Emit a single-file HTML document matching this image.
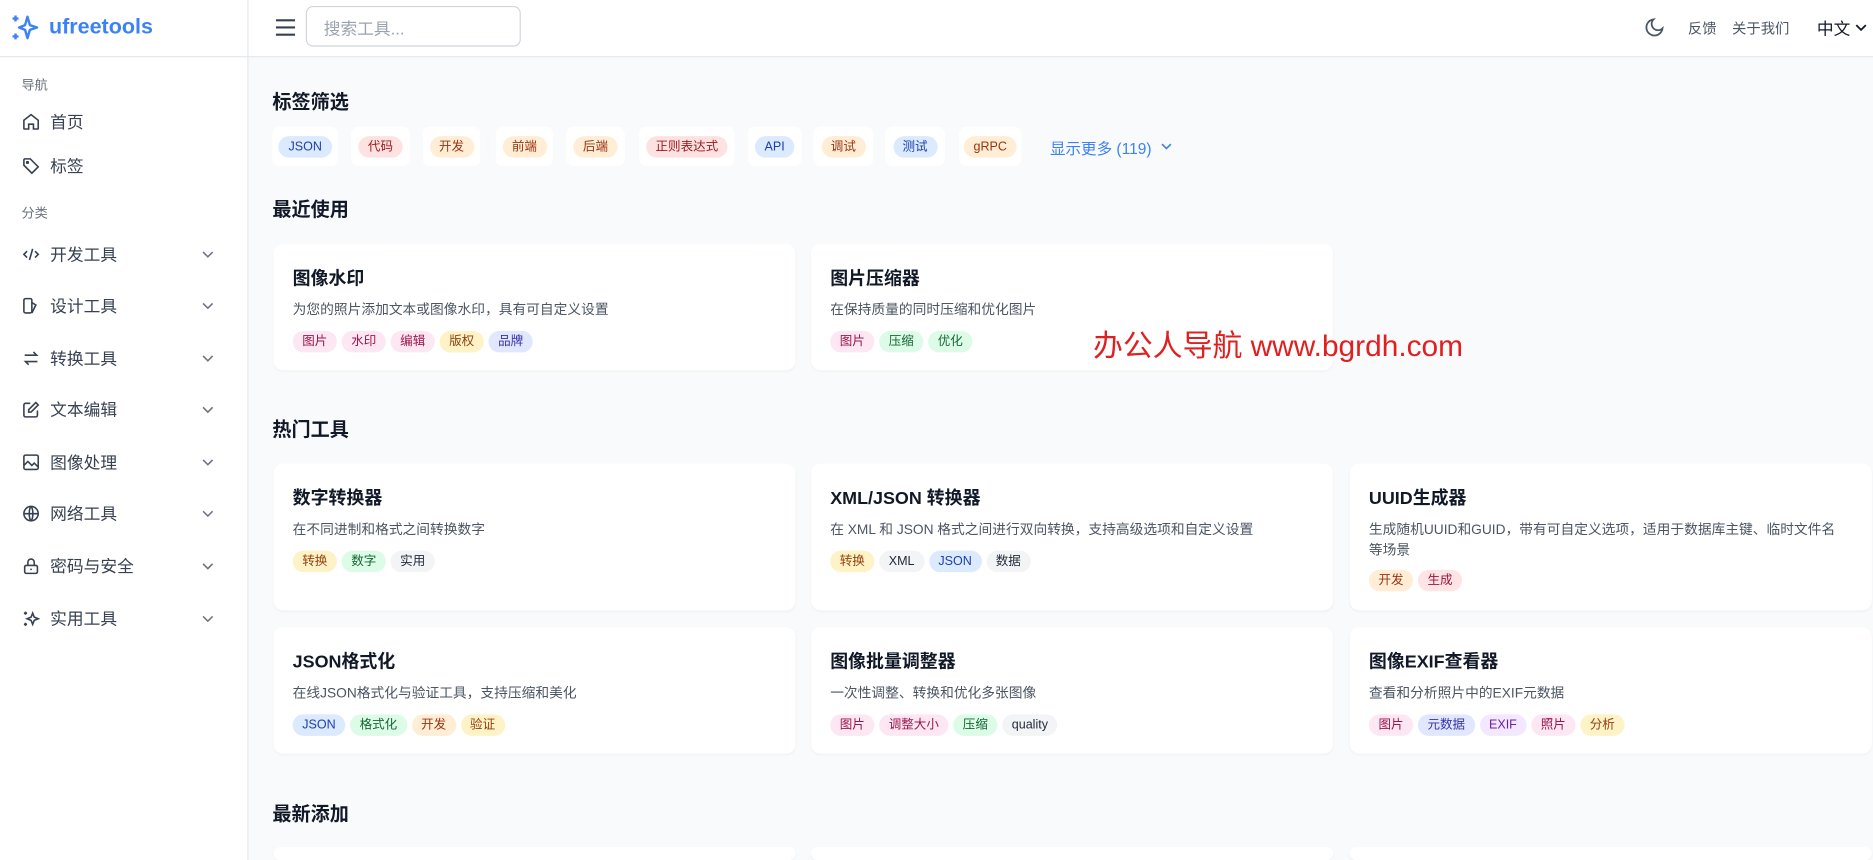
<!DOCTYPE html>
<html><head><meta charset="utf-8"><style>
*{box-sizing:border-box;margin:0;padding:0}
html,body{width:1873px;height:860px;overflow:hidden;background:#f9fafb}
body{font-family:"Liberation Sans","Noto Sans CJK SC",sans-serif;color:#111827}
#w{position:absolute;left:0;top:0;width:1568px;height:720px;transform:scale(1.19452);transform-origin:0 0;background:#f9fafb;overflow:hidden}
.a{position:absolute}
#side{left:0;top:0;width:208px;height:720px;background:#fff;border-right:1px solid #e5e7eb}
#top{left:208px;top:0;width:1360px;height:48px;background:#fff;border-bottom:1px solid #e5e7eb}
.lbl{font-size:11px;color:#6b7280;left:18px}
.nav{left:18px;font-size:14px;color:#374151;display:flex;align-items:center;width:170px;height:20px}
.nav svg{width:16px;height:16px;margin-right:8px;flex:none}
.nav .ch{position:absolute;right:8px;width:12px;height:12px;margin:0}
h2{position:absolute;left:228px;font-size:16px;font-weight:700;color:#111827}
.tb{position:absolute;top:106px;height:33px;background:#fff;border-radius:6px;display:flex;align-items:center;justify-content:center}
.p{display:inline-block;height:18px;line-height:18px;padding:0 8px;border-radius:9px;font-size:10.5px;margin-right:4px;white-space:nowrap}
.bl{background:#dbeafe;color:#1e40af}.rd{background:#fee2e2;color:#991b1b}.or{background:#ffedd5;color:#9a3412}
.pk{background:#fce7f3;color:#9d174d}.yl{background:#fef3c7;color:#92400e}.in{background:#e0e7ff;color:#3730a3}
.gr{background:#dcfce7;color:#166534}.gy{background:#f3f4f6;color:#1f2937}.pu{background:#f3e8ff;color:#6b21a8}.ro{background:#ffe4e6;color:#9f1239}
.c{position:absolute;width:437px;background:#fff;border-radius:8px;box-shadow:0 1px 2px rgba(0,0,0,.04);padding:0 16px}
.c .t{position:absolute;left:16px;top:18px;font-size:15px;font-weight:700;color:#111827}
.c .d{position:absolute;left:16px;right:40px;top:48px;font-size:11.5px;color:#4b5563;line-height:17px}
.c .g{position:absolute;left:16px;display:flex}
</style></head><body><div id="w">
<div id="side" class="a">
 <svg class="a" style="left:8px;top:10px" width="26" height="26" viewBox="0 0 26 26" fill="none" stroke="#3b82f6" stroke-width="2" stroke-linejoin="round"><path d="M15 4 L17 11 L23 13 L17 15 L15 22 L13 15 L8 13 L13 11 Z"/><path d="M5 3v5M2.5 5.5h5M5 18v5M2.5 20.5h5"/></svg>
 <div class="a" style="left:41px;top:12px;font-size:18px;font-weight:700;color:#3b82f6">ufreetools</div>
 <div class="a" style="left:0;top:47px;width:208px;border-top:1px solid #e5e7eb"></div>
 <div class="a lbl" style="top:63px">导航</div>
 <div class="a nav" style="top:92px"><svg viewBox="0 0 24 24" fill="none" stroke="#374151" stroke-width="2"><path d="M3 10l9-7 9 7v10a1 1 0 0 1-1 1h-5v-6h-6v6H4a1 1 0 0 1-1-1z"/></svg>首页</div>
 <div class="a nav" style="top:129px"><svg viewBox="0 0 24 24" fill="none" stroke="#374151" stroke-width="2"><path d="M3 4v7l10 10 8-8L11 3H4z"/><circle cx="7.5" cy="7.5" r="1"/></svg>标签</div>
 <div class="a lbl" style="top:170px">分类</div>
 <div class="a nav" style="top:203px"><svg viewBox="0 0 24 24" fill="none" stroke="#374151" stroke-width="2"><path d="M7 8l-4 4 4 4M17 8l4 4-4 4M14 5l-4 14"/></svg>开发工具<svg class="ch" viewBox="0 0 12 12" fill="none" stroke="#6b7280" stroke-width="1.3"><path d="M2 4l4 4 4-4"/></svg></div>
 <div class="a nav" style="top:246px"><svg viewBox="0 0 24 24" fill="none" stroke="#374151" stroke-width="2"><rect x="3" y="3" width="10" height="18" rx="2"/><path d="M13 8l5 3-5 10M7 17h0"/></svg>设计工具<svg class="ch" viewBox="0 0 12 12" fill="none" stroke="#6b7280" stroke-width="1.3"><path d="M2 4l4 4 4-4"/></svg></div>
 <div class="a nav" style="top:290px"><svg viewBox="0 0 24 24" fill="none" stroke="#374151" stroke-width="2"><path d="M4 8h15l-4-4M20 16H5l4 4"/></svg>转换工具<svg class="ch" viewBox="0 0 12 12" fill="none" stroke="#6b7280" stroke-width="1.3"><path d="M2 4l4 4 4-4"/></svg></div>
 <div class="a nav" style="top:333px"><svg viewBox="0 0 24 24" fill="none" stroke="#374151" stroke-width="2"><path d="M11 4H5a2 2 0 0 0-2 2v13a2 2 0 0 0 2 2h13a2 2 0 0 0 2-2v-6"/><path d="M18 3l3 3-9 9H9v-3z"/></svg>文本编辑<svg class="ch" viewBox="0 0 12 12" fill="none" stroke="#6b7280" stroke-width="1.3"><path d="M2 4l4 4 4-4"/></svg></div>
 <div class="a nav" style="top:377px"><svg viewBox="0 0 24 24" fill="none" stroke="#374151" stroke-width="2"><rect x="3" y="3" width="18" height="18" rx="2"/><path d="M3 16l5-5 5 5 3-3 5 5"/></svg>图像处理<svg class="ch" viewBox="0 0 12 12" fill="none" stroke="#6b7280" stroke-width="1.3"><path d="M2 4l4 4 4-4"/></svg></div>
 <div class="a nav" style="top:420px"><svg viewBox="0 0 24 24" fill="none" stroke="#374151" stroke-width="2"><circle cx="12" cy="12" r="9"/><path d="M3 12h18M12 3c-3 3-3 15 0 18M12 3c3 3 3 15 0 18"/></svg>网络工具<svg class="ch" viewBox="0 0 12 12" fill="none" stroke="#6b7280" stroke-width="1.3"><path d="M2 4l4 4 4-4"/></svg></div>
 <div class="a nav" style="top:464px"><svg viewBox="0 0 24 24" fill="none" stroke="#374151" stroke-width="2"><rect x="4" y="11" width="16" height="10" rx="2"/><path d="M8 11V7a4 4 0 0 1 8 0v4M12 15v2"/></svg>密码与安全<svg class="ch" viewBox="0 0 12 12" fill="none" stroke="#6b7280" stroke-width="1.3"><path d="M2 4l4 4 4-4"/></svg></div>
 <div class="a nav" style="top:508px"><svg viewBox="0 0 24 24" fill="none" stroke="#374151" stroke-width="2"><path d="M14 5l2 5 5 2-5 2-2 5-2-5-5-2 5-2z"/><path d="M5 3v4M3 5h4M5 17v4M3 19h4"/></svg>实用工具<svg class="ch" viewBox="0 0 12 12" fill="none" stroke="#6b7280" stroke-width="1.3"><path d="M2 4l4 4 4-4"/></svg></div>
</div>
<div id="top" class="a">
 <svg class="a" style="left:22px;top:14px" width="18" height="18" viewBox="0 0 18 18" stroke="#374151" stroke-width="1.8"><path d="M1 3h16M1 9h16M1 15h16"/></svg>
 <div class="a" style="left:48px;top:5px;width:180px;height:34px;border:1px solid #d1d5db;border-radius:6px;font-size:14px;color:#9ca3af;padding:8px 0 0 14px">搜索工具...</div>
 <svg class="a" style="left:1168px;top:14px" width="18" height="18" viewBox="0 0 24 24" fill="none" stroke="#4b5563" stroke-width="2"><path d="M21 13A9 9 0 1 1 11 3a7 7 0 0 0 10 10z"/></svg>
 <div class="a" style="left:1205px;top:15px;font-size:12px;color:#4b5563">反馈</div>
 <div class="a" style="left:1242px;top:15px;font-size:12px;color:#4b5563">关于我们</div>
 <div class="a" style="left:1313px;top:14px;font-size:14px;color:#111827">中文</div>
 <svg class="a" style="left:1344px;top:17px" width="12" height="12" viewBox="0 0 12 12" fill="none" stroke="#111827" stroke-width="1.5"><path d="M2 4l4 4 4-4"/></svg>
</div>

<h2 style="top:72px">标签筛选</h2>
<div class="tb" style="left:228px;width:55px"><span class="p bl" style="margin:0">JSON</span></div>
<div class="tb" style="left:294px;width:49px"><span class="p rd" style="margin:0">代码</span></div>
<div class="tb" style="left:354px;width:48px"><span class="p or" style="margin:0">开发</span></div>
<div class="tb" style="left:415px;width:48px"><span class="p or" style="margin:0">前端</span></div>
<div class="tb" style="left:474px;width:49px"><span class="p or" style="margin:0">后端</span></div>
<div class="tb" style="left:535px;width:80px"><span class="p rd" style="margin:0">正则表达式</span></div>
<div class="tb" style="left:626px;width:45px"><span class="p bl" style="margin:0">API</span></div>
<div class="tb" style="left:681px;width:50px"><span class="p or" style="margin:0">调试</span></div>
<div class="tb" style="left:741px;width:50px"><span class="p bl" style="margin:0">测试</span></div>
<div class="tb" style="left:803px;width:52px"><span class="p or" style="margin:0">gRPC</span></div>
<div class="a" style="left:879px;top:114px;font-size:13px;color:#3b82f6">显示更多 (119)</div>
<svg class="a" style="left:971px;top:117px" width="11" height="11" viewBox="0 0 12 12" fill="none" stroke="#3b82f6" stroke-width="1.5"><path d="M2 4l4 4 4-4"/></svg>

<h2 style="top:162px">最近使用</h2>
<div class="c" style="left:229px;top:204px;height:106px"><div class="t">图像水印</div><div class="d">为您的照片添加文本或图像水印，具有可自定义设置</div><div class="g" style="top:73px"><span class="p pk">图片</span><span class="p pk">水印</span><span class="p pk">编辑</span><span class="p yl">版权</span><span class="p in">品牌</span></div></div>
<div class="c" style="left:679px;top:204px;height:106px"><div class="t">图片压缩器</div><div class="d">在保持质量的同时压缩和优化图片</div><div class="g" style="top:73px"><span class="p pk">图片</span><span class="p gr">压缩</span><span class="p gr">优化</span></div></div>
<div class="a" style="left:915px;top:270px;font-size:25px;color:#e02020">办公人导航 www.bgrdh.com</div>

<h2 style="top:346px">热门工具</h2>
<div class="c" style="left:229px;top:388px;height:123px"><div class="t">数字转换器</div><div class="d">在不同进制和格式之间转换数字</div><div class="g" style="top:73px"><span class="p yl">转换</span><span class="p gr">数字</span><span class="p gy">实用</span></div></div>
<div class="c" style="left:679px;top:388px;height:123px"><div class="t">XML/JSON 转换器</div><div class="d">在 XML 和 JSON 格式之间进行双向转换，支持高级选项和自定义设置</div><div class="g" style="top:73px"><span class="p yl">转换</span><span class="p gy">XML</span><span class="p bl">JSON</span><span class="p gy">数据</span></div></div>
<div class="c" style="left:1130px;top:388px;height:123px"><div class="t">UUID生成器</div><div class="d" style="right:30px">生成随机UUID和GUID，带有可自定义选项，适用于数据库主键、临时文件名等场景</div><div class="g" style="top:89px"><span class="p or">开发</span><span class="p ro">生成</span></div></div>
<div class="c" style="left:229px;top:525px;height:106px"><div class="t">JSON格式化</div><div class="d">在线JSON格式化与验证工具，支持压缩和美化</div><div class="g" style="top:73px"><span class="p bl">JSON</span><span class="p gr">格式化</span><span class="p or">开发</span><span class="p yl">验证</span></div></div>
<div class="c" style="left:679px;top:525px;height:106px"><div class="t">图像批量调整器</div><div class="d">一次性调整、转换和优化多张图像</div><div class="g" style="top:73px"><span class="p pk">图片</span><span class="p pk">调整大小</span><span class="p gr">压缩</span><span class="p gy">quality</span></div></div>
<div class="c" style="left:1130px;top:525px;height:106px"><div class="t">图像EXIF查看器</div><div class="d">查看和分析照片中的EXIF元数据</div><div class="g" style="top:73px"><span class="p pk">图片</span><span class="p in">元数据</span><span class="p pu">EXIF</span><span class="p pk">照片</span><span class="p yl">分析</span></div></div>

<h2 style="top:668px">最新添加</h2>
<div class="c" style="left:229px;top:709px;height:11px"></div>
<div class="c" style="left:679px;top:709px;height:11px"></div>
<div class="c" style="left:1130px;top:709px;height:11px"></div>
</div></body></html>
